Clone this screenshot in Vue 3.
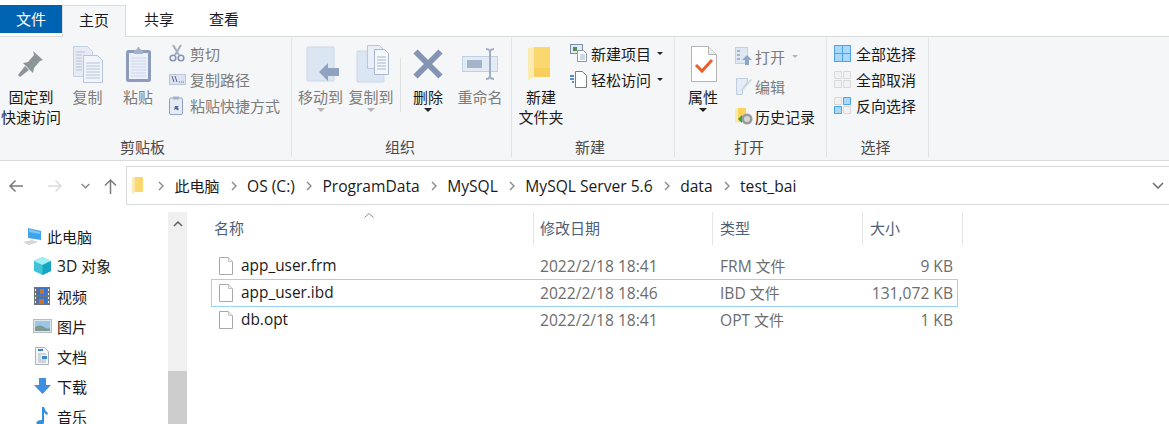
<script setup>
const nav = ['此电脑', 'OS (C:)', 'ProgramData', 'MySQL', 'MySQL Server 5.6', 'data', 'test_bai']
const files = [
  { name: 'app_user.frm', date: '2022/2/18 18:41', ext: 'FRM', size: '9 KB' },
  { name: 'app_user.ibd', date: '2022/2/18 18:46', ext: 'IBD', size: '131,072 KB', focus: true },
  { name: 'db.opt', date: '2022/2/18 18:41', ext: 'OPT', size: '1 KB' }
]
</script>

<template>
  <div class="win">
    <div class="tabs">
      <div class="tab file">文件</div>
      <div class="tab home">主页</div>
      <div class="tab share">共享</div>
      <div class="tab view">查看</div>
    </div>

    <div class="ribbon">
      <section class="group g1">
        <div class="body">
          <div class="big w62">
            <div class="ico"><svg width="28" height="28" viewBox="0 0 28 28"><path d="M16 1l10 9-3 1-6 7-1 5-10-10 5-1 6-7z" fill="#8d9599"/><path d="M8 16l4 4-9 7-2-2z" fill="#8d9599"/></svg></div>
            <div class="lb">固定到<br>快速访问</div>
          </div>
          <div class="big w51 dis">
            <div class="ico"><svg width="32" height="37" viewBox="0 0 32 37"><path d="M1.500 .5h14l5 5v25h-19z" fill="#e6ebf5" stroke="#c3cfe2"/><path d="M11.500 9.500h14l5 5v22h-19z" fill="#f1f4fa" stroke="#b7c5dc"/><path d="M14 17h14M14 20h14M14 23h14M14 26h14M14 29h14M14 32h14M4 6h9M4 9h6M4 12h6M4 15h6M4 18h6M4 21h6M4 24h6" stroke="#b8c4d9"/></svg></div>
            <div class="lb">复制</div>
          </div>
          <div class="big w50 dis">
            <div class="ico"><svg width="27" height="37" viewBox="0 0 27 37"><rect x="1" y="4" width="25" height="32" rx="2.500" fill="#8c9cba"/><rect x="4" y="7" width="19" height="26" fill="#eaf0f9"/><path d="M9 5l3-2 1-2h1l1 2 3 2v3H9z" fill="#a3b1ca"/><path d="M6 12h15M6 15h15M6 18h15M6 21h15M6 24h15M6 27h15M6 30h15" stroke="#ccd6e7"/></svg></div>
            <div class="lb">粘贴</div>
          </div>
          <div class="col col1 dis">
            <div class="sm"><svg width="16" height="18" viewBox="0 0 16 18"><path d="M4 1l6 10M12 1L6 11" stroke="#a3afc2" stroke-width="2" fill="none"/><circle cx="4" cy="14" r="2.800" fill="none" stroke="#8496b4" stroke-width="1.600"/><circle cx="12" cy="14" r="2.800" fill="none" stroke="#8496b4" stroke-width="1.600"/></svg><span>剪切</span></div>
            <div class="sm"><svg width="17" height="11" viewBox="0 0 17 11"><rect x=".5" y=".5" width="16" height="10" fill="#dbe3f0" stroke="#b9c6db"/><path d="M3 2l2 6M6 2l2 6M10 8h1M12 8h1M14 8h1" stroke="#556a8c"/></svg><span>复制路径</span></div>
            <div class="sm"><svg width="14" height="19" viewBox="0 0 14 19"><rect x=".5" y="2" width="13" height="16.500" rx="1.500" fill="#e6ecf6" stroke="#8f9fbc"/><rect x="4" y=".5" width="6" height="3" fill="#a3b1ca"/><path d="M5 14l1-4 4 0-1.500 1.500 1.500 1.500-1.500 1.500-1.500-1.500z" fill="#52698f"/></svg><span>粘贴快捷方式</span></div>
          </div>
        </div>
        <div class="glabel">剪贴板</div>
      </section>

      <section class="group g2">
        <div class="body">
          <div class="big w51 dis">
            <div class="ico shift5"><svg width="34" height="36" viewBox="0 0 34 36"><rect x="1" y="1" width="27" height="34" rx="1" fill="#dbe6f3" stroke="#c9d7e9"/><path d="M13 26l9-9v5h11v8H22v5z" fill="#8fa3c0"/></svg></div>
            <div class="lb">移动到</div>
            <i class="caret light"></i>
          </div>
          <div class="big w50 dis">
            <div class="ico shift4"><svg width="34" height="38" viewBox="0 0 34 38"><rect x="1" y="6" width="27" height="31" rx="1" fill="#dbe6f3" stroke="#c9d7e9"/><path d="M11.500 .5h12l4 4v19h-16z" fill="#e9eff8" stroke="#b8c6da"/><path d="M18.500 4.500h10l4 4v21h-14z" fill="#f4f7fb" stroke="#a9b8cf"/><path d="M21 12h9M21 15h9M21 18h9M21 21h9M21 24h9" stroke="#a9b8cf"/></svg></div>
            <div class="lb">复制到</div>
            <i class="caret light"></i>
          </div>
          <div class="vsep"></div>
          <div class="big w54">
            <div class="ico"><svg width="30" height="30" viewBox="0 0 30 30"><path d="M2.500 2.500l25 25M27.500 2.500l-25 25" stroke="#8494b4" stroke-width="6"/></svg></div>
            <div class="lb">删除</div>
            <i class="caret"></i>
          </div>
          <div class="big w50 dis">
            <div class="ico"><svg width="37" height="32" viewBox="0 0 37 32"><rect x=".5" y="8.500" width="35" height="15" fill="#e2eaf5" stroke="#c3d0e2"/><rect x="5" y="12" width="15" height="8" fill="#a5b3c9"/><path d="M24 1q3 0 4 2 1-2 4-2M24 31q3 0 4-2 1 2 4 2M28 3v26" stroke="#a0adc2" stroke-width="2" fill="none"/></svg></div>
            <div class="lb">重命名</div>
          </div>
        </div>
        <div class="glabel">组织</div>
      </section>

      <section class="group g3">
        <div class="body">
          <div class="big w56">
            <div class="ico shiftl"><svg width="24" height="36" viewBox="0 0 24 36"><path d="M7 1h16v30H7z" fill="#fbd86f"/><path d="M7 1L1 2v32l6-3z" fill="#fdeab0"/><path d="M7 22h16v9H7z" fill="#f8cf5c"/></svg></div>
            <div class="lb">新建<br>文件夹</div>
          </div>
          <div class="col">
            <div class="sm"><svg width="18" height="18" viewBox="0 0 18 18"><rect x=".5" y=".5" width="12" height="9" fill="#d9ecf9" stroke="#7d8da6"/><rect x="3" y="3" width="4" height="4" fill="#5d8a4f"/><path d="M7.500 6.500h6l3 3v8h-9z" fill="#fff" stroke="#8b97a8"/><path d="M10 11h5M10 13h5M10 15h5" stroke="#9fb5d3"/></svg><span>新建项目</span><i class="drop"></i></div>
            <div class="sm"><svg width="17" height="17" viewBox="0 0 17 17"><path d="M5.500 .5h7l4 4v12h-11z" fill="#fff" stroke="#7d7d7d"/><path d="M0 5h4M0 8h4M2 11h2" stroke="#2a6cb0" stroke-width="1.300"/></svg><span>轻松访问</span><i class="drop"></i></div>
          </div>
        </div>
        <div class="glabel">新建</div>
      </section>

      <section class="group g4">
        <div class="body">
          <div class="big w56">
            <div class="ico"><svg width="27" height="36" viewBox="0 0 27 36"><path d="M1.500.5h17l8 8v27h-25z" fill="#fff" stroke="#b5b5b5"/><path d="M18.500.5v8h8" fill="#eee" stroke="#b5b5b5"/><path d="M6 19l6 6 10-11" fill="none" stroke="#e8602c" stroke-width="3"/></svg></div>
            <div class="lb">属性</div>
            <i class="caret"></i>
          </div>
          <div class="col tall">
            <div class="sm dis"><svg width="18" height="18" viewBox="0 0 18 18"><rect x=".5" y=".5" width="12" height="16" fill="#dfe7f2" stroke="#c3d0e2"/><path d="M2 4h3M2 8h3M2 12h3" stroke="#a3b3ca" stroke-width="2"/><path d="M12 8l5 5h-3v5h-4v-5H7z" fill="#8fa7c6"/></svg><span>打开</span><i class="drop light"></i></div>
            <div class="sm dis"><svg width="18" height="18" viewBox="0 0 18 18"><path d="M1.500 1.500h11v3l-5 8v5h-6z" fill="#e5ecf6" stroke="#bfcde0"/><path d="M6 14l1-3 9-9 1 1-8 9z" fill="#c9d6e8"/></svg><span>编辑</span></div>
            <div class="sm"><svg width="18" height="18" viewBox="0 0 18 18"><path d="M3 1h8v14H3z" fill="#fbd35f"/><path d="M3 1L0 2v14l3-1z" fill="#fde9a8"/><circle cx="12" cy="12" r="5.500" fill="#9b9b9b"/><circle cx="12" cy="12" r="3" fill="#d5d5d5"/><path d="M3 12l4-4v8z" fill="#3da13a"/></svg><span>历史记录</span></div>
          </div>
        </div>
        <div class="glabel">打开</div>
      </section>

      <section class="group g5">
        <div class="body">
          <div class="col">
            <div class="sm"><svg width="17" height="17" viewBox="0 0 17 17"><rect width="17" height="17" fill="#4da3e6"/><path d="M1 1h7v7H1zM9 1h7v7H9zM1 9h7v7H1zM9 9h7v7H9z" fill="#a9d8fb"/></svg><span>全部选择</span></div>
            <div class="sm"><svg width="17" height="17" viewBox="0 0 17 17"><path d="M.5.5h7v7h-7zM9.500.5h7v7h-7zM.5 9.500h7v7h-7zM9.500 9.500h7v7h-7z" fill="#f2f2f2" stroke="#d9d9d9"/></svg><span>全部取消</span></div>
            <div class="sm"><svg width="17" height="17" viewBox="0 0 17 17"><path d="M.5.5h7v7h-7zM9.500 9.500h7v7h-7z" fill="#f2f2f2" stroke="#d9d9d9"/><path d="M.5 9.500h7v7h-7zM9.500.5h7v7h-7z" fill="#a9d8fb" stroke="#4da3e6"/></svg><span>反向选择</span></div>
          </div>
        </div>
        <div class="glabel">选择</div>
      </section>
    </div>

    <div class="addr-row">
      <div class="navs">
        <svg class="n1" width="16" height="14" viewBox="0 0 16 14"><path d="M15 7H2M7.500 1.500L2 7l5.500 5.500" fill="none" stroke="#7a7a7a" stroke-width="1.500"/></svg>
        <svg class="n2" width="16" height="14" viewBox="0 0 16 14"><path d="M1 7h13M8.500 1.500L14 7l-5.500 5.500" fill="none" stroke="#dcdcdc" stroke-width="1.500"/></svg>
        <svg class="n3" width="9" height="6" viewBox="0 0 9 6"><path d="M.7 1l3.800 3.800L8.300 1" fill="none" stroke="#8a8a8a" stroke-width="1.500"/></svg>
        <svg class="n4" width="13" height="16" viewBox="0 0 13 16"><path d="M6.500 16V2M1 7.500L6.500 2 12 7.500" fill="none" stroke="#7a7a7a" stroke-width="1.500"/></svg>
      </div>
      <div class="addr">
        <svg class="afolder" width="12" height="18" viewBox="0 0 12 18"><path d="M3 0h8v15H3z" fill="#fbd86f"/><path d="M3 0L0 1v16l3-2z" fill="#fdeab0"/></svg>
        <template v-for="(p, i) in nav" :key="p">
          <svg class="crumb" :class="{ first: i === 0 }" width="6" height="10" viewBox="0 0 6 10"><path d="M1 1l4 4-4 4" fill="none" stroke="#8a8a8a" stroke-width="1.400"/></svg>
          <span class="path" :class="{ cjk: i === 0 }">{{ p }}</span>
        </template>
        <svg class="adrop" width="12" height="7" viewBox="0 0 12 7"><path d="M1 1l5 5 5-5" fill="none" stroke="#707070" stroke-width="1.600"/></svg>
      </div>
    </div>

    <div class="main">
      <aside class="tree">
        <div class="node top"><svg width="20" height="18" viewBox="0 0 20 18"><path d="M6 1l13 3v9L6 11z" fill="#3fa4ec"/><path d="M7 2l11 3v2L7 5z" fill="#7cc7f7"/><path d="M1 15l9-2 6 2-9 3z" fill="#d2d6da"/></svg><span>此电脑</span></div>
        <div class="node"><svg width="19" height="18" viewBox="0 0 19 18"><path d="M9.500 0L18 4v10l-8.500 4L1 14V4z" fill="#3ec3d8"/><path d="M9.500 0L18 4 9.500 8 1 4z" fill="#9ff0f4"/><path d="M9.500 8L18 4v10l-8.500 4z" fill="#17a5c4"/></svg><span><span class="lat">3D</span> 对象</span></div>
        <div class="node"><svg width="19" height="18" viewBox="0 0 19 18"><rect x="1" width="16" height="18" fill="#6d7378"/><rect x="4" y="1" width="10" height="7" fill="#3a73c9"/><rect x="4" y="10" width="10" height="7" fill="#3a73c9"/><path d="M7 2h4v5H7zM6 12h5v5H6z" fill="#c8742a"/><path d="M2 2h1v2H2zM2 6h1v2H2zM2 10h1v2H2zM2 14h1v2H2zM15 2h1v2h-1zM15 6h1v2h-1zM15 10h1v2h-1zM15 14h1v2h-1z" fill="#eee"/></svg><span>视频</span></div>
        <div class="node"><svg width="19" height="14" viewBox="0 0 19 14"><rect x=".5" y=".5" width="18" height="13" fill="#dfe6ec" stroke="#b5bcc3"/><rect x="2" y="2" width="15" height="10" fill="#9cc6e8"/><path d="M2 8q5-3 9 0t6 1v3H2z" fill="#7d9a8e"/></svg><span>图片</span></div>
        <div class="node"><svg width="19" height="18" viewBox="0 0 19 18"><path d="M2.500.5h9l4 4v13h-13z" fill="#f3f5f7" stroke="#a9b0b8"/><path d="M5 3h5" stroke="#3c86d1" stroke-width="2"/><path d="M5 7h8M5 13h8M5 15h8" stroke="#aab3bd"/><rect x="9" y="9" width="5" height="3" fill="#3c86d1"/><path d="M5 9h3M5 11h3" stroke="#aab3bd"/></svg><span>文档</span></div>
        <div class="node"><svg width="19" height="16" viewBox="0 0 19 16"><path d="M6 0h7v7h5l-8.500 9L1 7h5z" fill="#3e8fe0"/></svg><span>下载</span></div>
        <div class="node"><svg width="19" height="18" viewBox="0 0 19 18"><path d="M9 0h2q1 4 4 6l-1 2q-2-1-3-3v10q0 3-4 3-4 0-3.500-2.500T9 13z" fill="#2f8fe0"/></svg><span>音乐</span></div>
      </aside>
      <div class="sbar">
        <svg class="sup" width="10" height="6" viewBox="0 0 10 6"><path d="M1 5l4-4 4 4" fill="none" stroke="#606060" stroke-width="1.500"/></svg>
        <div class="thumb"></div>
      </div>
      <div class="list">
        <div class="head">
          <div class="hc hname">名称<svg class="sort" width="10" height="5" viewBox="0 0 10 5"><path d="M.5 4.500L5 .5l4.500 4" fill="none" stroke="#8a8a8a"/></svg></div>
          <div class="hc hdate">修改日期</div>
          <div class="hc htype">类型</div>
          <div class="hc hsize">大小</div>
        </div>
        <div v-for="f in files" :key="f.name" class="row" :class="{ focus: f.focus }">
          <div class="cname">
            <svg width="14" height="18" viewBox="0 0 14 18"><path d="M.5.500h9l4 4v13H.5z" fill="#fff" stroke="#a9a9a9"/><path d="M9.500.5v4h4" fill="#f0f0f0" stroke="#c4c4c4"/></svg>
            <span class="lat nm">{{ f.name }}</span>
          </div>
          <div class="cdate lat">{{ f.date }}</div>
          <div class="ctype"><span class="lat">{{ f.ext }}</span> 文件</div>
          <div class="csize lat">{{ f.size }}</div>
        </div>
      </div>
    </div>
  </div>
</template>

<style scoped>
.win {
  width: 1169px;
  height: 424px;
  overflow: hidden;
  background: #fff;
  font-family: "Open Sans", "Noto Sans CJK SC", sans-serif;
  font-size: 15px;
  color: #1a1a1a;
  display: flex;
  flex-direction: column;
}
svg { display: block; flex: none; }
.lat { font-size: 15.6px; }
.nm { font-size: 15.4px; }

.tabs { display: flex; height: 36px; padding-top: 5px; box-sizing: border-box; }
.tab { line-height: 28px; text-align: center; }
.file { width: 62px; height: 28px; background: #0063b1; color: #fff; }
.home {
  width: 64px; height: 32px; box-sizing: border-box;
  background: #f5f6f7; border: 1px solid #dadbdc; border-bottom: 0; line-height: 28px;
  position: relative; z-index: 1;
}
.share { width: 66px; }
.view { width: 64px; }

.ribbon {
  display: flex; height: 125px; box-sizing: border-box;
  background: #f5f6f7;
  border-top: 1px solid #dadbdc; border-bottom: 1px solid #dadbdc;
  padding-top: 1px;
}
.group {
  display: flex; flex-direction: column; height: 119px;
  border-right: 1px solid #e2e3e4; box-sizing: border-box;
}
.g1 { width: 292px; }
.g2 { width: 220px; }
.g3 { width: 163px; }
.g4 { width: 152px; }
.g5 { width: 102px; }
.body { display: flex; height: 99px; padding-top: 3px; box-sizing: border-box; }
.g2 .body { padding-left: 3px; }
.g3 .body { padding-left: 1px; }
.g5 .body { padding-left: 7px; }
.glabel { text-align: center; line-height: 20px; color: #4a4a4a; padding-right: 6px; }
.g2 .glabel, .g4 .glabel { padding-right: 3px; }
.g5 .glabel { padding-right: 4px; }

.big { display: flex; flex-direction: column; align-items: center; flex: none; }
.w62 { width: 62px; }
.w51 { width: 51px; }
.w50 { width: 50px; }
.w54 { width: 54px; }
.w56 { width: 56px; }
.ico { height: 46px; display: flex; align-items: center; justify-content: center; }
.shift5 { padding-left: 5px; }
.shift4 { padding-left: 4px; }
.shiftl { padding-right: 4px; }
.lb { line-height: 20px; text-align: center; white-space: nowrap; }
.dis { color: #7c7c7c; }
.vsep { width: 1px; height: 54px; margin: 17px 0 0 4px; background: #dfe0e1; flex: none; }

.caret { width: 0; height: 0; border: 4px solid transparent; border-top-color: #222; border-bottom: 0; margin-top: 1px; }
.caret.light { border-top-color: #b5b5b5; }
.drop { width: 0; height: 0; border: 3.500px solid transparent; border-top-color: #222; border-bottom: 0; margin-left: 6px; }
.drop.light { border-top-color: #b5b5b5; margin-left: 7px; }

.col { display: flex; flex-direction: column; margin-top: -1px; }
.col1 { padding-left: 6px; }
.g3 .col { padding-left: 1px; }
.g4 .col { padding-left: 4px; }
.tall { padding-top: 1px; }
.sm { display: grid; grid-template-columns: 21px auto auto; align-items: center; justify-content: start; height: 26px; white-space: nowrap; }
.tall .sm { height: 30px; grid-template-columns: 20px auto auto; }
.g5 .sm { grid-template-columns: 22px auto; }
.sm span { display: block; }

.addr-row { display: flex; height: 50px; padding-top: 5px; box-sizing: border-box; flex: none; }
.navs { width: 126px; display: flex; align-items: center; height: 39px; flex: none; }
.n1 { margin-left: 8px; }
.n2 { margin-left: 23px; }
.n3 { margin-left: 18px; }
.n4 { margin-left: 14px; }
.addr {
  flex: 1; height: 39px; box-sizing: border-box;
  border: 1px solid #d9d9d9; border-right: 0;
  display: flex; align-items: center; padding-left: 5px;
}
.afolder { margin-right: 14px; }
.crumb { margin: 0 10.500px 0 11px; }
.crumb.first { margin-left: 0; }
.path { white-space: nowrap; line-height: 20px; font-size: 15.6px; }
.path.cjk { font-size: 15px; }
.adrop { margin-left: auto; margin-right: 5px; }

.main { display: flex; flex: 1; min-height: 0; }
.tree { width: 168px; padding-top: 10px; box-sizing: border-box; flex: none; }
.node { display: flex; align-items: center; height: 30px; padding-left: 33px; white-space: nowrap; }
.node svg { margin-right: 5px; }
.node.top { padding-left: 22px; }
.sbar {
  width: 19px; background: #f0f0f0; margin-top: 1px; flex: none;
  display: flex; flex-direction: column; align-items: center;
}
.sup { margin-top: 9px; }
.thumb { width: 100%; background: #cdcdcd; margin-top: 144px; flex: 1; }

.list { padding: 1px 0 0 20px; flex: 1; }
.head { display: flex; height: 33px; color: #4c607a; }
.hc { border-right: 1px solid #e5e5e5; box-sizing: border-box; line-height: 32px; position: relative; }
.hname { width: 327px; padding-left: 7px; }
.hdate { width: 179px; padding-left: 6px; }
.htype { width: 150px; padding-left: 7px; }
.hsize { width: 100px; padding-left: 7px; }
.sort { position: absolute; left: 157px; top: 1px; }

.row {
  display: flex; align-items: center; width: 747px; height: 27px; box-sizing: border-box;
  margin-left: 4px; border: 1px solid transparent; color: #6d6d6d;
}
.head + .row { margin-top: 7px; }
.row.focus { border-color: #99d1ff; height: 28px; margin-bottom: -1px; padding-bottom: 1px; }
.cname { width: 322px; display: flex; align-items: center; padding-left: 7px; box-sizing: border-box; color: #1a1a1a; }
.cname svg { margin-right: 8px; }
.cdate { width: 179px; padding-left: 6px; box-sizing: border-box; }
.ctype { width: 150px; padding-left: 7px; box-sizing: border-box; }
.csize { width: 90px; text-align: right; }
</style>
